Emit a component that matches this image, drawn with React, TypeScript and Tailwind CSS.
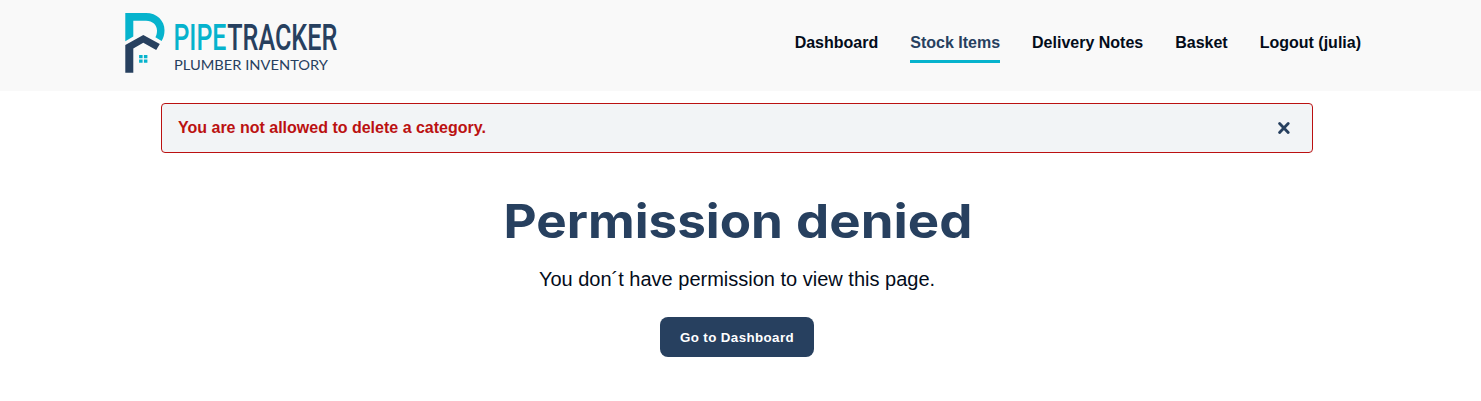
import React from "react";

function Logo() {
  return (
    <svg width="230" height="91" viewBox="120 0 230 91" role="img" aria-label="PipeTracker">
      <path
        fill="#06b3cd"
        d="M125.3 13H146C157 13 164.5 20.8 164.5 30.3C164.5 34.4 163.6 37.8 161.6 41L155.4 37.3C156.5 35.4 157 33.2 157 30.7C157 25 152.6 20.8 146 20.8H133.3V36.6L125.3 41.3Z"
      />
      <path
        fill="#27405f"
        d="M125.3 45L143.3 34.9L159.8 44L156.2 50.1L143.3 42.8L133.3 48.6V72.8H125.3Z"
      />
      <path fill="#06b3cd" d="M139.1 55h3.5v3.3h-3.5zM143.9 55h3.5v3.3h-3.5zM139.1 59.5h3.5v3.3h-3.5zM143.9 59.5h3.5v3.3h-3.5z" />
      <text y="50" fontSize="37" fontWeight="500" className="font-['Roboto']">
        <tspan x="173.4" textLength="53" lengthAdjust="spacingAndGlyphs" fill="#06b3cd">PIPE</tspan>
        <tspan x="227.3" textLength="110" lengthAdjust="spacingAndGlyphs" fill="#27405f">TRACKER</tspan>
      </text>
      <text x="174" y="70" fontSize="14" textLength="154" lengthAdjust="spacingAndGlyphs" fill="#27405f" className="font-['Lato']">
        PLUMBER INVENTORY
      </text>
    </svg>
  );
}

const links = ["Dashboard", "Stock Items", "Delivery Notes", "Basket", "Logout (julia)"];

export default function App() {
  return (
    <div className="h-[401px] overflow-hidden bg-white font-['Liberation_Sans',Arial,sans-serif] text-[#030c1a]">
      <header className="flex h-[91px] items-start justify-between bg-[#f9f9f9] pl-[120px] pr-[120px]">
        <Logo />
        <nav className="flex gap-8 pt-[31px] text-base font-bold">
          {links.map((label) => (
            <a
              key={label}
              href="#"
              className={
                label === "Stock Items"
                  ? "h-8 border-b-3 border-[#06b3cd] text-[#27405f]"
                  : "h-8"
              }
            >
              {label}
            </a>
          ))}
        </nav>
      </header>
      <main className="flex flex-col items-center pr-[7px] pt-3">
        <div
          role="alert"
          className="flex h-[50px] w-[1152px] items-center justify-between rounded border border-[#bb1111] bg-[#f2f4f6] pl-4 pr-[22px] font-bold text-[#bb1111]"
        >
          <span>You are not allowed to delete a category.</span>
          <button aria-label="Close">
            <svg width="13" height="14" viewBox="0 0 13 14" fill="none" stroke="#27405f" strokeWidth="2.8" strokeLinecap="round">
              <path d="M2.6 2.5L11.2 11.5M11.2 2.5L2.6 11.5" />
            </svg>
          </button>
        </div>
        <h1 className="mt-[39px] flex h-[60px] justify-center">
          <svg width="480" height="60" viewBox="497 192 480 60">
            <text y="238" fontSize="47" fontWeight="700" fill="#27405f" className="font-['Inter']">
              <tspan x="503.5" textLength="279.5" lengthAdjust="spacingAndGlyphs">Permission</tspan>{" "}
              <tspan x="796" textLength="176.5" lengthAdjust="spacingAndGlyphs">denied</tspan>
            </text>
          </svg>
        </h1>
        <p className="mt-[13px] text-xl leading-7">You don´t have permission to view this page.</p>
        <button className="mt-6 h-10 w-[154px] rounded-lg bg-[#27405f] pt-px text-[13.333px] font-bold tracking-[0.4px] text-white">
          Go to Dashboard
        </button>
      </main>
    </div>
  );
}
